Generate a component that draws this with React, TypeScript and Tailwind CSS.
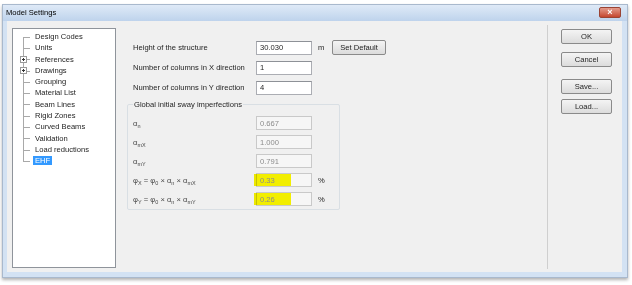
import React from "react"

type TreeItem = { label: string; plus?: boolean; selected?: boolean }

const treeItems: TreeItem[] = [
  { label: "Design Codes" },
  { label: "Units" },
  { label: "References", plus: true },
  { label: "Drawings", plus: true },
  { label: "Grouping" },
  { label: "Material List" },
  { label: "Beam Lines" },
  { label: "Rigid Zones" },
  { label: "Curved Beams" },
  { label: "Validation" },
  { label: "Load reductions" },
  { label: "EHF", selected: true },
]

function TreeRow({ item, first, last }: { item: TreeItem; first: boolean; last: boolean }) {
  return (
    <div className="relative h-[11.3px] flex items-center pl-[22px]">
      <span
        className={
          "absolute left-[10px] w-px bg-[#a9a9a9] " +
          (last ? "top-0 h-1/2" : first ? "top-1/2 bottom-0" : "top-0 bottom-0")
        }
      />
      <span className="absolute left-[10px] top-1/2 w-[7px] h-px bg-[#a9a9a9]" />
      {item.plus && (
        <span className="absolute left-[7px] top-[2px] w-[7px] h-[7px] border border-[#9a9a9a] bg-white flex items-center justify-center">
          <span className="absolute w-[3px] h-px bg-[#333]" />
          <span className="absolute w-px h-[3px] bg-[#333]" />
        </span>
      )}
      <span
        className={
          item.selected
            ? "bg-[#3399ff] text-white px-[2px] leading-[9px] -ml-[2px]"
            : "text-[#1e1e1e]"
        }
      >
        {item.label}
      </span>
    </div>
  )
}

function TextBox({ value, disabled, highlight }: { value: string; disabled?: boolean; highlight?: boolean }) {
  return (
    <div
      className={
        "relative w-[56px] h-[14px] border flex items-center px-[3px] " +
        (disabled
          ? "bg-[#f6f6f6] border-[#c9c9c9] text-[#8c8c8c]"
          : "bg-white border-[#abadb3] border-t-[#8e9197] text-[#1e1e1e]")
      }
    >
      {highlight && (
        <span className="absolute -left-[3px] top-[0px] w-[37px] h-[12px] bg-[#fbf700] mix-blend-multiply" />
      )}
      <span className="relative">{value}</span>
    </div>
  )
}

function Btn({ label, className = "" }: { label: string; className?: string }) {
  return (
    <div
      className={
        "h-[15px] border border-[#8a8a8a] rounded-[2px] bg-gradient-to-b from-[#f4f4f4] to-[#dcdcdc] flex items-center justify-center text-[#1e1e1e] " +
        className
      }
    >
      {label}
    </div>
  )
}

function Alpha({ sub }: { sub: string }) {
  return (
    <span>
      α<sub className="text-[5.5px] align-[-1px]">{sub}</sub>
    </span>
  )
}

function Phi({ axis, sub }: { axis: string; sub: string }) {
  return (
    <span>
      φ<sub className="text-[5.5px] align-[-1px]">{axis}</sub> = φ<sub className="text-[5.5px] align-[-1px]">0</sub> × α
      <sub className="text-[5.5px] align-[-1px]">n</sub> × α<sub className="text-[5.5px] align-[-1px]">{sub}</sub>
    </span>
  )
}

export default function App() {
  return (
    <div className="w-[632px] h-[285px] bg-white pt-[4px] pl-[2px] font-['Liberation_Sans',Arial,sans-serif] text-[7.6px] overflow-hidden">
      <div className="w-[626px] h-[274px] flex flex-col border border-[#a9b9cd] bg-[#d3e2f3] shadow-[0_2px_3px_rgba(0,0,0,0.3)]">
        {/* title bar */}
        <div className="h-[16px] shrink-0 flex items-center justify-between bg-gradient-to-b from-[#dfeaf7] to-[#bed3ec] pl-[3px] pr-[6px]">
          <span className="text-black">Model Settings</span>
          <div className="w-[22px] h-[11px] -mt-[1px] rounded-[2px] border border-[#9a4434] bg-gradient-to-b from-[#e39a8b] to-[#c4452e] flex items-center justify-center text-white text-[9px] font-bold leading-none">
            ×
          </div>
        </div>

        {/* client area */}
        <div className="flex-1 ml-[4px] mr-[5px] mb-[5px] bg-[#f0f0f0] flex pt-[7px] pb-[3px] pl-[5px]">
          {/* tree */}
          <div className="w-[104px] h-[240px] shrink-0 border border-[#8f949b] bg-white pt-[2px]">
            {treeItems.map((it, i) => (
              <TreeRow key={it.label} item={it} first={i === 0} last={i === treeItems.length - 1} />
            ))}
          </div>

          {/* main panel */}
          <div className="w-[432px] shrink-0 pl-[11px] pt-[15px] border-r border-[#cfcfcf] -mt-[3px]">
            <div className="pl-[6px] flex flex-col gap-[5px] text-[#1e1e1e]">
              <div className="flex items-center h-[15px]">
                <span className="w-[123px]">Height of the structure</span>
                <TextBox value="30.030" />
                <span className="ml-[6px] w-[14px]">m</span>
                <Btn label="Set Default" className="w-[54px]" />
              </div>
              <div className="flex items-center h-[15px]">
                <span className="w-[123px]">Number of columns in X direction</span>
                <TextBox value="1" />
              </div>
              <div className="flex items-center h-[15px]">
                <span className="w-[123px]">Number of columns in Y direction</span>
                <TextBox value="4" />
              </div>
            </div>

            <fieldset className="mt-[4px] w-[213px] border border-[#d9dfe4] rounded-[2px] pl-[5px] pb-[3px]">
              <legend className="text-[#1e1e1e] px-[1px]">Global initial sway imperfections</legend>
              <div className="flex flex-col gap-[5px] text-[#4a4a4a] pt-[6px]">
                <div className="flex items-center h-[14px]">
                  <span className="w-[123px]"><Alpha sub="n" /></span>
                  <TextBox value="0.667" disabled />
                </div>
                <div className="flex items-center h-[14px]">
                  <span className="w-[123px]"><Alpha sub="mX" /></span>
                  <TextBox value="1.000" disabled />
                </div>
                <div className="flex items-center h-[14px]">
                  <span className="w-[123px]"><Alpha sub="mY" /></span>
                  <TextBox value="0.791" disabled />
                </div>
                <div className="flex items-center h-[14px]">
                  <span className="w-[123px]"><Phi axis="X" sub="mX" /></span>
                  <TextBox value="0.33" disabled highlight />
                  <span className="ml-[6px] text-[#1e1e1e]">%</span>
                </div>
                <div className="flex items-center h-[14px]">
                  <span className="w-[123px]"><Phi axis="Y" sub="mY" /></span>
                  <TextBox value="0.26" disabled highlight />
                  <span className="ml-[6px] text-[#1e1e1e]">%</span>
                </div>
              </div>
            </fieldset>
          </div>

          {/* buttons */}
          <div className="pl-[13px] pt-[1px] flex flex-col">
            <Btn label="OK" className="w-[51px]" />
            <Btn label="Cancel" className="w-[51px] mt-[8px]" />
            <Btn label="Save..." className="w-[51px] mt-[12px]" />
            <Btn label="Load..." className="w-[51px] mt-[5px]" />
          </div>
        </div>
      </div>
    </div>
  )
}
